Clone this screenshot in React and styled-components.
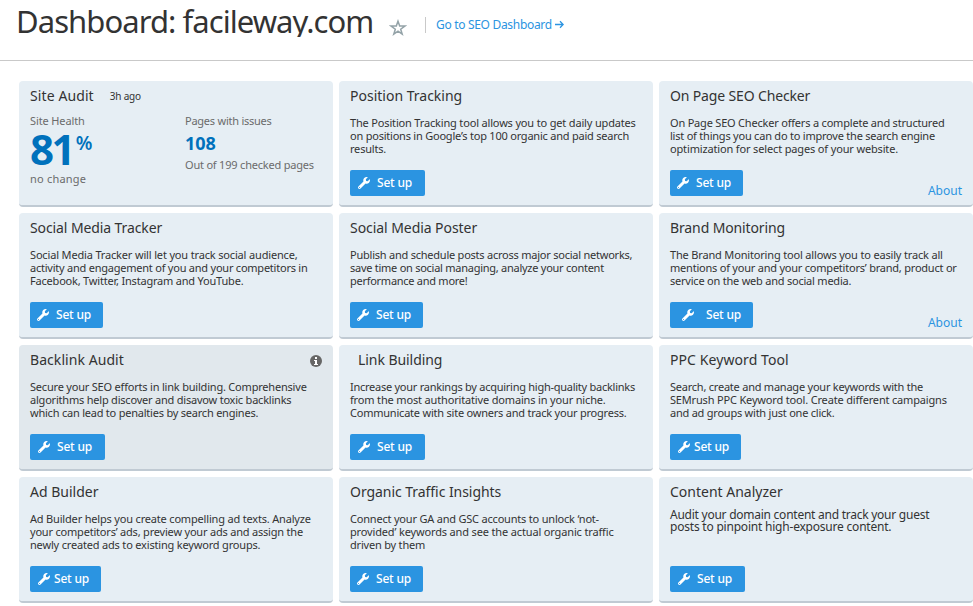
import styled, { createGlobalStyle } from "styled-components";
import { FaWrench } from "react-icons/fa";

const GlobalStyle = createGlobalStyle`
  * {
    box-sizing: border-box;
  }

  body {
    margin: 0;
    background: #fff;
    color: #333;
    font-family: "Noto Sans", "Open Sans", sans-serif;
    overflow: hidden;
  }
`;

const Page = styled.div`
  width: 973px;
  height: 606px;
  overflow: hidden;
`;

const Header = styled.header`
  height: 61px;
  padding-left: 16px;
  border-bottom: 1px solid #c9c9c9;
  display: flex;
  align-items: flex-start;
`;

const PageTitle = styled.h1`
  width: 360px;
  height: 37px;
  margin: 0;
  overflow: hidden;
  white-space: nowrap;
  font-size: 31px;
  font-weight: 400;
  line-height: 43px;
  letter-spacing: -0.94px;
`;

const Star = styled.svg`
  width: 18px;
  height: 18px;
  margin: 19px 0 0 13px;
  fill: none;
  stroke: #94a3a8;
  stroke-width: 1.5;
`;

const DashboardLink = styled.a`
  height: 16px;
  margin: 17px 0 0 18px;
  padding-left: 10px;
  border-left: 1px solid #c9c9c9;
  display: flex;
  align-items: center;
  gap: 3px;
  color: #2b94e1;
  font-size: 12px;
  line-height: 16px;
  white-space: nowrap;
  letter-spacing: -0.31px;
`;

const ArrowIcon = styled.svg`
  width: 9px;
  height: 9px;
  margin-bottom: 1px;
  fill: none;
  stroke: currentColor;
  stroke-width: 1.3;
`;

const Grid = styled.main`
  padding: 20px 0 0 19px;
  display: grid;
  grid-template-columns: repeat(3, 314px);
  grid-auto-rows: 126px;
  gap: 6px;
`;

const Card = styled.section`
  position: relative;
  padding: 5px 11px 0;
  border-radius: 4px;
  border-bottom: 2px solid #c0cad3;
  background: ${(props) => (props.$active ? "#e1e8ed" : "#e6eef4")};
  display: flex;
  flex-direction: column;
  align-items: flex-start;
`;

const CardHeader = styled.div`
  width: 100%;
  height: 20px;
  padding-left: ${(props) => props.$indent || 0}px;
  display: flex;
  align-items: center;
`;

const CardTitle = styled.h2`
  margin: 0;
  font-size: 14px;
  font-weight: 400;
  line-height: 20px;
  white-space: nowrap;
  letter-spacing: ${(props) => props.$track || 0}px;
`;

const Updated = styled.span`
  margin-left: 16px;
  font-size: 10px;
  line-height: 20px;
  letter-spacing: -0.2px;
`;

const InfoIcon = styled.svg`
  width: 12px;
  height: 12px;
  margin: 2px 0 0 auto;
`;

const Description = styled.div`
  height: ${(props) => (props.$large ? 57 : 54)}px;
  margin-top: ${(props) => (props.$large ? 7 : 10)}px;
  font-size: ${(props) => (props.$large ? 12 : 11)}px;
  line-height: ${(props) => (props.$large ? 12 : 13)}px;
`;

const Line = styled.p`
  margin: 0;
  white-space: nowrap;
  letter-spacing: ${(props) => props.$track}px;
`;

const Button = styled.button`
  width: ${(props) => props.$width}px;
  height: 26px;
  padding: 0 0 0 ${(props) => props.$inset}px;
  border: 0;
  border-radius: 2px;
  background: #2b94e1;
  color: #fff;
  display: flex;
  align-items: center;
  gap: ${(props) => props.$gap}px;
  font-family: inherit;
  font-size: 12px;
  font-weight: 500;
  line-height: 26px;
  letter-spacing: -0.2px;
  white-space: nowrap;
`;

const About = styled.a`
  position: absolute;
  right: 11px;
  bottom: 5px;
  color: #2b94e1;
  font-size: 12px;
  line-height: 18px;
`;

const Stats = styled.div`
  padding-top: 7px;
  display: grid;
  grid-template-columns: 155px 1fr;
`;

const Stat = styled.div`
  color: #6b6b6b;
  font-size: 11px;
  line-height: 16px;
  white-space: nowrap;
`;

const StatText = styled.div`
  height: 15px;
  line-height: 15px;
  letter-spacing: ${(props) => props.$track}px;
`;

const Score = styled.div`
  height: 43px;
  color: #0071bc;
  display: flex;
  align-items: flex-start;
  gap: 3px;
  font-size: 42px;
  font-weight: 700;
  line-height: 41px;
  letter-spacing: -2.6px;
`;

const Percent = styled.span`
  font-size: 19px;
  font-weight: 600;
  line-height: 31px;
  letter-spacing: 0;
`;

const Issues = styled.div`
  height: 29px;
  color: #0071bc;
  font-size: 18px;
  font-weight: 700;
  line-height: 31px;
`;

// line entries are [text, letter-spacing], button is [width, inset, gap]
const tools = [
  {
    title: "Position Tracking",
    lines: [
      ["The Position Tracking tool allows you to get daily updates", -0.165],
      ["on positions in Google’s top 100 organic and paid search", -0.22],
      ["results.", -0.2],
    ],
    button: [75, 8, 7],
  },
  {
    title: "On Page SEO Checker",
    track: -0.15,
    lines: [
      ["On Page SEO Checker offers a complete and structured", -0.2],
      ["list of things you can do to improve the search engine", -0.22],
      ["optimization for select pages of your website.", -0.15],
    ],
    button: [73, 7, 7],
    about: true,
  },
  {
    title: "Social Media Tracker",
    track: -0.1,
    lines: [
      ["Social Media Tracker will let you track social audience,", -0.16],
      ["activity and engagement of you and your competitors in", -0.23],
      ["Facebook, Twitter, Instagram and YouTube.", -0.2],
    ],
    button: [73, 7, 7],
  },
  {
    title: "Social Media Poster",
    track: -0.06,
    lines: [
      ["Publish and schedule posts across major social networks,", -0.23],
      ["save time on social managing, analyze your content", -0.26],
      ["performance and more!", -0.27],
    ],
    button: [73, 7, 7],
  },
  {
    title: "Brand Monitoring",
    track: -0.12,
    lines: [
      ["The Brand Monitoring tool allows you to easily track all", -0.17],
      ["mentions of your and your competitors’ brand, product or", -0.22],
      ["service on the web and social media.", -0.22],
    ],
    button: [83, 12, 12],
    about: true,
  },
  {
    title: "Backlink Audit",
    track: 0.06,
    lines: [
      ["Secure your SEO efforts in link building. Comprehensive", -0.2],
      ["algorithms help discover and disavow toxic backlinks", -0.21],
      ["which can lead to penalties by search engines.", -0.22],
    ],
    button: [75, 8, 7],
    active: true,
  },
  {
    title: "Link Building",
    track: -0.06,
    indent: 8,
    lines: [
      ["Increase your rankings by acquiring high-quality backlinks", -0.26],
      ["from the most authoritative domains in your niche.", -0.16],
      ["Communicate with site owners and track your progress.", -0.22],
    ],
    button: [75, 8, 7],
  },
  {
    title: "PPC Keyword Tool",
    track: 0.08,
    lines: [
      ["Search, create and manage your keywords with the", -0.23],
      ["SEMrush PPC Keyword tool. Create different campaigns", -0.17],
      ["and ad groups with just one click.", -0.23],
    ],
    button: [71, 8, 4],
  },
  {
    title: "Ad Builder",
    lines: [
      ["Ad Builder helps you create compelling ad texts. Analyze", -0.18],
      ["your competitors’ ads, preview your ads and assign the", -0.2],
      ["newly created ads to existing keyword groups.", -0.18],
    ],
    button: [71, 8, 4],
  },
  {
    title: "Organic Traffic Insights",
    track: -0.05,
    lines: [
      ["Connect your GA and GSC accounts to unlock ‘not-", -0.2],
      ["provided’ keywords and see the actual organic traffic", -0.15],
      ["driven by them", -0.2],
    ],
    button: [73, 7, 7],
  },
  {
    title: "Content Analyzer",
    large: true,
    lines: [
      ["Audit your domain content and track your guest", -0.25],
      ["posts to pinpoint high-exposure content.", -0.21],
    ],
    button: [75, 8, 7],
  },
];

function SiteAudit() {
  return (
    <Card>
      <CardHeader>
        <CardTitle $track={0.1}>Site Audit</CardTitle>
        <Updated>3h ago</Updated>
      </CardHeader>
      <Stats>
        <Stat>
          <StatText $track={-0.12}>Site Health</StatText>
          <Score>
            81<Percent>%</Percent>
          </Score>
          <StatText $track={0.2}>no change</StatText>
        </Stat>
        <Stat>
          <StatText $track={-0.24}>Pages with issues</StatText>
          <Issues>108</Issues>
          <StatText $track={-0.2}>Out of 199 checked pages</StatText>
        </Stat>
      </Stats>
    </Card>
  );
}

function ToolCard({ tool }) {
  const [width, inset, gap] = tool.button;

  return (
    <Card $active={tool.active}>
      <CardHeader $indent={tool.indent}>
        <CardTitle $track={tool.track}>{tool.title}</CardTitle>
        {tool.active && (
          <InfoIcon viewBox="0 0 12 12">
            <circle cx="6" cy="6" r="6" fill="#666" />
            <path d="M5 2h2v2H5zM4 5h3v4h1v1H4V9h1V6H4z" fill="#fff" />
          </InfoIcon>
        )}
      </CardHeader>
      <Description $large={tool.large}>
        {tool.lines.map(([text, track]) => (
          <Line key={text} $track={track}>
            {text}
          </Line>
        ))}
      </Description>
      <Button $width={width} $inset={inset} $gap={gap}>
        <FaWrench size={12} />
        Set up
      </Button>
      {tool.about && <About>About</About>}
    </Card>
  );
}

export default function App() {
  return (
    <Page>
      <GlobalStyle />
      <Header>
        <PageTitle>Dashboard: facileway.com</PageTitle>
        <Star viewBox="0 0 18 18">
          <path d="M9 2.2l1.7 4.9h5.1l-4.1 3.1 1.5 5L9 12.2l-4.2 3 1.5-5-4.1-3.1h5.1z" />
        </Star>
        <DashboardLink>
          Go to SEO Dashboard
          <ArrowIcon viewBox="0 0 9 9">
            <path d="M0 4.5h8M5 1.2l3.2 3.3L5 7.8" />
          </ArrowIcon>
        </DashboardLink>
      </Header>
      <Grid>
        <SiteAudit />
        {tools.map((tool) => (
          <ToolCard key={tool.title} tool={tool} />
        ))}
      </Grid>
    </Page>
  );
}
